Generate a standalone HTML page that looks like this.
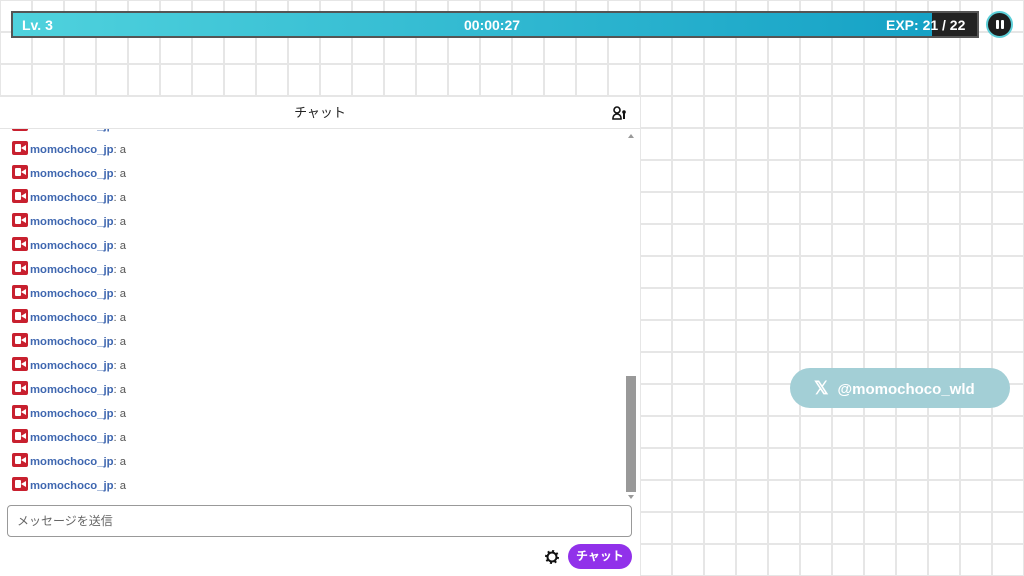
<!DOCTYPE html>
<html><head><meta charset="utf-8"><style>
*{margin:0;padding:0;box-sizing:border-box}
body{width:1024px;height:576px;overflow:hidden;position:relative;font-family:"Liberation Sans","Noto Sans CJK JP",sans-serif;
background-color:#fff;
background-image:linear-gradient(#e6e6e6 2px,transparent 2px),linear-gradient(90deg,#e6e6e6 2px,transparent 2px);
background-size:32px 32px;background-position:-1px -1px;}
.bar{position:absolute;left:11px;top:11px;width:968px;height:27px;border:2px solid #555;background:linear-gradient(90deg,#4fd2dd,#16a2c6 95%);color:#fff;font-weight:bold;font-size:14px;overflow:hidden}
.bar .dark{position:absolute;left:919px;top:0;bottom:0;right:0;background:#222}
.bar span{position:absolute;top:4px}
.pause{position:absolute;left:986px;top:11px;width:27px;height:27px;border-radius:50%;background:#1e1e1e;border:2px solid #5ccfd8}
.pause:before,.pause:after{content:"";position:absolute;top:7px;width:3px;height:9px;background:#fff;border-radius:1px}
.pause:before{left:8px}.pause:after{left:13px}
.panel{position:absolute;left:0;top:97px;width:640px;height:479px;background:#fff}
.head{height:32px;border-bottom:1px solid #e4e4e4;text-align:center;font-size:13px;line-height:31px;color:#222}
.msgs{position:absolute;left:0;top:32px;width:640px;height:368px;overflow:hidden}
.m{position:absolute;left:12px;height:24px;line-height:24px;font-size:11.3px;color:#555;white-space:nowrap}
.m b{color:#3f67b0}
.ic{display:inline-block;width:16px;height:14px;background:#c8202f;border-radius:2px;vertical-align:-2px;margin-right:2px;position:relative}
.ic:after{content:"";position:absolute;left:3px;top:3px;width:6px;height:8px;background:#fff;border-radius:1px}
.ic:before{content:"";position:absolute;left:9px;top:4px;border-right:5px solid #fff;border-top:3px solid transparent;border-bottom:3px solid transparent}
.sb{position:absolute;left:626px;top:279px;width:10px;height:116px;background:#999}
.input{position:absolute;left:7px;top:408px;width:625px;height:32px;border:1px solid #999;border-radius:4px;font-size:12px;color:#666;padding-left:9px;line-height:30px}
.send{position:absolute;left:568px;top:447px;width:64px;height:25px;border-radius:13px;background:#9131ea;color:#fff;font-weight:bold;font-size:12px;text-align:center;line-height:25px}
.xbtn{position:absolute;left:790px;top:368px;width:220px;height:40px;border-radius:20px;background:#a3cfd6;color:#fff;font-weight:bold;font-size:15px;line-height:40px;padding-left:24px}
</style></head><body>
<div class="bar"><div class="dark"></div><span style="left:9px">Lv. 3</span><span style="left:451px">00:00:27</span><span style="left:873px">EXP: 21 / 22</span></div>
<div class="pause"></div>
<div class="panel">
<div class="head">チャット
<svg style="position:absolute;left:612px;top:9px" width="15" height="14" viewBox="0 0 15 14"><circle cx="5" cy="4" r="3" fill="none" stroke="#111" stroke-width="1.6"/><path d="M1 13v-1a4 4 0 0 1 8 0v1z" fill="none" stroke="#111" stroke-width="1.6"/><circle cx="12" cy="6" r="1.8" fill="#111"/><rect x="11" y="7" width="2" height="6" fill="#111"/></svg></div>
<div class="msgs">
<div class="m" style="top:-15px"><span class="ic"></span><b>momochoco_jp</b>: a</div>
<div class="m" style="top:9px"><span class="ic"></span><b>momochoco_jp</b>: a</div>
<div class="m" style="top:33px"><span class="ic"></span><b>momochoco_jp</b>: a</div>
<div class="m" style="top:57px"><span class="ic"></span><b>momochoco_jp</b>: a</div>
<div class="m" style="top:81px"><span class="ic"></span><b>momochoco_jp</b>: a</div>
<div class="m" style="top:105px"><span class="ic"></span><b>momochoco_jp</b>: a</div>
<div class="m" style="top:129px"><span class="ic"></span><b>momochoco_jp</b>: a</div>
<div class="m" style="top:153px"><span class="ic"></span><b>momochoco_jp</b>: a</div>
<div class="m" style="top:177px"><span class="ic"></span><b>momochoco_jp</b>: a</div>
<div class="m" style="top:201px"><span class="ic"></span><b>momochoco_jp</b>: a</div>
<div class="m" style="top:225px"><span class="ic"></span><b>momochoco_jp</b>: a</div>
<div class="m" style="top:249px"><span class="ic"></span><b>momochoco_jp</b>: a</div>
<div class="m" style="top:273px"><span class="ic"></span><b>momochoco_jp</b>: a</div>
<div class="m" style="top:297px"><span class="ic"></span><b>momochoco_jp</b>: a</div>
<div class="m" style="top:321px"><span class="ic"></span><b>momochoco_jp</b>: a</div>
<div class="m" style="top:345px"><span class="ic"></span><b>momochoco_jp</b>: a</div>
</div>
<div style="position:absolute;left:628px;top:37px;border-bottom:4px solid #999;border-left:3px solid transparent;border-right:3px solid transparent"></div>
<div class="sb"></div>
<div style="position:absolute;left:628px;top:398px;border-top:4px solid #999;border-left:3px solid transparent;border-right:3px solid transparent"></div>
<div class="input">メッセージを送信</div>
<svg style="position:absolute;left:545px;top:453px" width="14" height="14" viewBox="0 0 14 14"><circle cx="7" cy="7" r="4.5" fill="none" stroke="#111" stroke-width="2"/><circle cx="7" cy="7" r="6" fill="none" stroke="#111" stroke-width="2" stroke-dasharray="2 2.7"/></svg>
<div class="send">チャット</div>
</div>
<div class="xbtn"><span style="font-size:18px;margin-right:9px">𝕏</span>@momochoco_wld</div>
</body></html>
